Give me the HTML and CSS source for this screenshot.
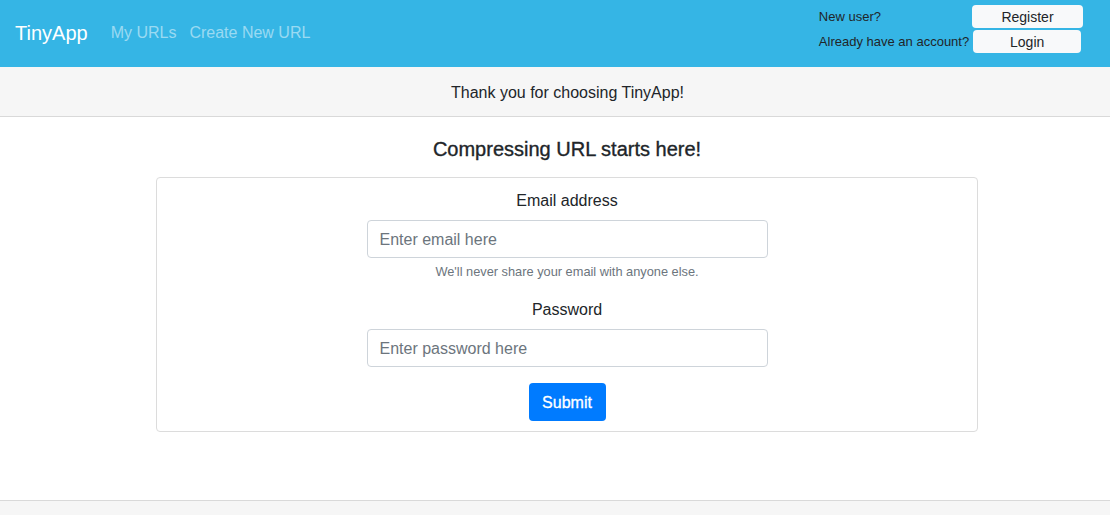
FILE: index.html
```html
<!DOCTYPE html>
<html lang="en">
<head>
<meta charset="utf-8">
<title>TinyApp</title>
<link rel="stylesheet" href="styles.css">
</head>
<body>
<header class="navbar">
  <a class="brand" href="#">TinyApp</a>
  <nav class="nav-links">
    <a href="#">My URLs</a>
    <a href="#">Create New URL</a>
  </nav>
  <div class="auth">
    <div class="auth-row">
      <span class="auth-text">New user?</span>
      <button class="auth-btn register">Register</button>
    </div>
    <div class="auth-row">
      <span class="auth-text">Already have an account?</span>
      <button class="auth-btn login">Login</button>
    </div>
  </div>
</header>
<div class="banner">Thank you for choosing TinyApp!</div>
<main class="main">
  <h5 class="title">Compressing URL starts here!</h5>
  <form class="card">
    <div class="group">
      <label class="label">Email address</label>
      <input class="input" type="email" placeholder="Enter email here">
      <small class="help">We'll never share your email with anyone else.</small>
    </div>
    <div class="group">
      <label class="label">Password</label>
      <input class="input" type="password" placeholder="Enter password here">
    </div>
    <button class="submit" type="button">Submit</button>
  </form>
</main>
<footer class="footer"></footer>
</body>
</html>
```

FILE: styles.css
```css
* { box-sizing: border-box; }
html, body { margin: 0; padding: 0; }
body {
  font-family: "Liberation Sans", Arial, sans-serif;
  font-size: 16px;
  line-height: 1.5;
  color: #212529;
  background: #fff;
  height: 515px;
  overflow: hidden;
}
.navbar {
  height: 67px;
  background: #35b5e5;
  display: flex;
  align-items: center;
  padding: 0 27px 0 15px;
}
.brand {
  color: #fff;
  font-size: 20px;
  text-decoration: none;
  margin-right: 23px;
  padding-bottom: 2px;
}
.nav-links { display: flex; gap: 13px; padding-bottom: 2px; }
.nav-links a {
  color: rgba(255,255,255,0.5);
  text-decoration: none;
  font-size: 16px;
}
.auth {
  margin-left: auto;
  display: flex;
  flex-direction: column;
  gap: 2px;
  padding-top: 5px;
  align-self: flex-start;
}
.auth-row {
  display: flex;
  align-items: center;
  height: 23px;
}
.auth-text { font-size: 13px; color: #212529; padding-top: 1px; }
.auth-row:first-child .auth-text { margin-right: 91px; }
.auth-row:last-child .auth-text { margin-right: 4px; }
.auth-btn {
  font-family: inherit;
  font-size: 14px;
  color: #212529;
  background: #f8f9fa;
  border: 0;
  border-radius: 4px;
  height: 23px;
  padding: 1px 0 0;
  line-height: 22px;
}
.register { width: 111px; }
.login { width: 108px; }
.banner {
  height: 50px;
  background: #f6f6f6;
  border-bottom: 1px solid #d9d9d9;
  text-align: center;
  font-size: 16px;
  line-height: 49px;
  padding: 1px 0 0 25px;
}
.main {
  display: flex;
  flex-direction: column;
  align-items: center;
  padding-left: 24px;
  height: 383px;
}
.title {
  margin: 20px 0 16px;
  font-size: 20px;
  font-weight: 500;
  line-height: 24px;
  -webkit-text-stroke: 0.35px #212529;
}
.card {
  width: 822px;
  border: 1px solid #dcdcdc;
  border-radius: 4px;
  padding: 10px 0;
  display: flex;
  flex-direction: column;
  align-items: center;
}
.group {
  display: flex;
  flex-direction: column;
  align-items: center;
  margin-bottom: 16px;
}
.label {
  font-size: 16px;
  line-height: 24px;
  padding-top: 1px;
  margin-bottom: 7px;
}
.input {
  width: 401px;
  height: 38px;
  border: 1px solid #ced4da;
  border-radius: 4px;
  padding: 7px 12px 5px;
  font-family: inherit;
  font-size: 16px;
  color: #495057;
}
.input::placeholder { color: #6c757d; }
.help {
  margin-top: 4px;
  font-size: 12.8px;
  line-height: 19px;
  color: #6c757d;
}
.submit {
  width: 77px;
  height: 38px;
  background: #007bff;
  border: 0;
  border-radius: 4px;
  color: #fff;
  font-family: inherit;
  font-size: 16px;
  padding: 1px 0 0;
  -webkit-text-stroke: 0.3px #fff;
}
.footer {
  height: 15px;
  background: #f6f6f6;
  border-top: 1px solid #d9d9d9;
}
```
